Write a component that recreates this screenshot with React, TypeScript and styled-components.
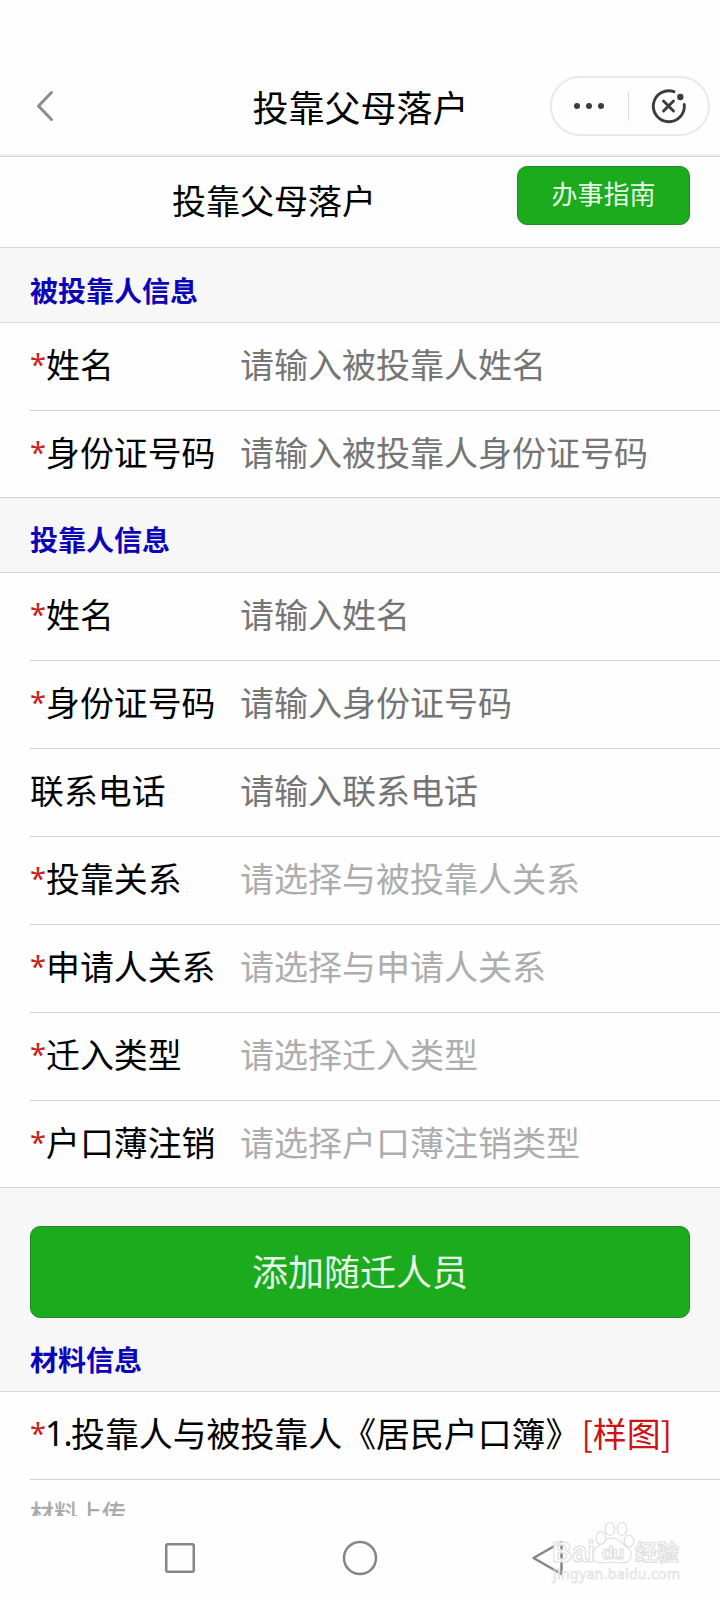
import React from 'react';
import styled, { createGlobalStyle } from 'styled-components';

const GlobalStyle = createGlobalStyle`
  * { box-sizing: border-box; }
  body {
    margin: 0;
    background: #fefefe;
    color: #000;
    font-family: "Noto Sans CJK SC", "Noto Sans", sans-serif;
  }
`;

const Screen = styled.div`
  position: relative;
  display: flex;
  flex-direction: column;
  width: 720px;
  height: 1600px;
  overflow: hidden;
  background: #fefefe;
`;

const NavBar = styled.header`
  display: grid;
  grid-template-columns: 170px 1fr 170px;
  align-items: center;
  flex: none;
  height: 157px;
  padding: 58px 10px 3px 36px;
  border-bottom: 1px solid #d3d3d3;
  box-shadow: inset 0 -2px 0 #f2f2f2;
`;

const NavTitle = styled.h1`
  margin: 0;
  padding: 1px 25px 0 0;
  font-size: 36px;
  font-weight: 400;
  line-height: 52px;
  text-align: center;
  white-space: nowrap;
`;

const Capsule = styled.div`
  display: flex;
  align-items: center;
  justify-self: end;
  width: 160px;
  height: 60px;
  border: 2px solid #e9e9e9;
  border-radius: 30px;
`;

const CapsuleHalf = styled.div<{ $width: number }>`
  display: flex;
  justify-content: center;
  width: ${(p) => p.$width}px;
`;

const CapsuleDivider = styled.div`
  width: 1px;
  height: 30px;
  background: #dedede;
`;

const PageHead = styled.div`
  display: flex;
  justify-content: space-between;
  align-items: flex-start;
  flex: none;
  height: 91px;
  padding: 9px 30px 0 172px;
  border-bottom: 1px solid #d6d6d6;
`;

const PageTitle = styled.h2`
  margin: 0;
  padding-top: 9px;
  font-size: 34px;
  font-weight: 400;
  line-height: 50px;
`;

const GreenButton = styled.button<{ $large?: boolean }>`
  display: flex;
  align-items: center;
  justify-content: center;
  width: ${(p) => (p.$large ? '660px' : '173px')};
  height: ${(p) => (p.$large ? '92px' : '59px')};
  padding: 0 0 ${(p) => (p.$large ? '3px' : '5px')};
  border: 1px solid #238a26;
  border-radius: 10px;
  background: #1bab1c;
  color: #e9fbe9;
  font-family: inherit;
  font-size: ${(p) => (p.$large ? 36 : 26)}px;
  line-height: 1.4;
`;

const SectionTitle = styled.h3<{ $height: number; $top: number }>`
  flex: none;
  height: ${(p) => p.$height}px;
  margin: 0;
  padding: ${(p) => p.$top}px 0 0 30px;
  border-bottom: 1px solid #d6d6d6;
  background: #f7f7f7;
  color: #0c04b8;
  font-size: 28px;
  font-weight: 700;
  line-height: 40px;
`;

const Group = styled.section`
  flex: none;
  padding-left: 30px;
  border-bottom: 1px solid #d6d6d6;
`;

const Row = styled.div`
  display: flex;
  height: 88px;
  padding-top: 16px;
  border-bottom: 1px solid #d3d3d3;
  font-size: 33.9px;
  line-height: 50px;
  white-space: nowrap;

  &:last-child {
    height: 86px;
    border-bottom: 0;
  }
`;

const Label = styled.label`
  display: flex;
  width: 210px;
`;

const Star = styled.span`
  width: 16px;
  color: #cb2020;
  font-family: "Noto Sans", sans-serif;
  font-size: 29px;
`;

const Placeholder = styled.span<{ $select?: boolean }>`
  color: ${(p) => (p.$select ? '#adadad' : '#757575')};
  font-size: 34px;
`;

const AddArea = styled.div`
  flex: none;
  height: 131px;
  padding: 38px 30px 0;
  background: #f7f7f7;
`;

const MaterialRow = styled(Row)`
  flex: none;
  margin-left: 30px;
`;

const Numeral = styled.span`
  width: 26px;
  margin-left: -1px;
  font-family: "Noto Sans", sans-serif;
  letter-spacing: -1px;
`;

const SampleLink = styled.span`
  margin-left: 2px;
  color: #cc1414;
`;

const UploadClip = styled.div`
  flex: none;
  height: 36px;
  padding: 14px 0 0 30px;
  overflow: hidden;
  color: #aaa;
  font-size: 24px;
  font-weight: 500;
  line-height: 36px;
`;

const SystemNav = styled.nav`
  display: flex;
  flex: 1;
  gap: 144px;
  padding: 24px 0 0 162px;
`;

const BackKey = styled.svg`
  margin-left: 9px;
`;

const Watermark = styled.svg`
  position: absolute;
  left: 545px;
  top: 1515px;
`;

type Field = { label: string; hint: string; required?: boolean; select?: boolean };

const hostFields: Field[] = [
  { label: '姓名', hint: '请输入被投靠人姓名', required: true },
  { label: '身份证号码', hint: '请输入被投靠人身份证号码', required: true },
];

const applicantFields: Field[] = [
  { label: '姓名', hint: '请输入姓名', required: true },
  { label: '身份证号码', hint: '请输入身份证号码', required: true },
  { label: '联系电话', hint: '请输入联系电话' },
  { label: '投靠关系', hint: '请选择与被投靠人关系', required: true, select: true },
  { label: '申请人关系', hint: '请选择与申请人关系', required: true, select: true },
  { label: '迁入类型', hint: '请选择迁入类型', required: true, select: true },
  { label: '户口薄注销', hint: '请选择户口薄注销类型', required: true, select: true },
];

const FieldGroup = ({ fields }: { fields: Field[] }) => (
  <Group>
    {fields.map((f) => (
      <Row key={f.label}>
        <Label>
          {f.required && <Star>*</Star>}
          {f.label}
        </Label>
        <Placeholder $select={f.select}>{f.hint}</Placeholder>
      </Row>
    ))}
  </Group>
);

const BackIcon = () => (
  <svg width="20" height="32" viewBox="0 0 20 32" fill="none" stroke="#8c8c8c" strokeWidth="3" strokeLinecap="round" strokeLinejoin="round">
    <path d="M15.500 2.500 2.500 16l13 13.500" />
  </svg>
);

const DotsIcon = () => (
  <svg width="32" height="8" viewBox="0 0 32 8" fill="#3c3c3c">
    <circle cx="3" cy="4" r="3" />
    <circle cx="15" cy="4" r="3" />
    <circle cx="27" cy="4" r="3" />
  </svg>
);

const CloseIcon = () => (
  <svg width="36" height="36" viewBox="0 0 36 36" fill="none" stroke="#3c3c3c" strokeWidth="2.900" strokeLinecap="round">
    <path d="M24 3.700A15.500 15.500 0 1 0 34.200 16.500" />
    <path d="m13.500 13 10 10M23.500 13 13.500 23" />
    <circle cx="30.300" cy="9" r="3.200" fill="#3c3c3c" stroke="none" />
  </svg>
);

const BaiduMark = () => (
  <Watermark width="150" height="76" viewBox="0 0 150 76" fill="#fff" fillOpacity="0.85" stroke="#dedede" strokeWidth="1.200">
    <g fontWeight="700" fontFamily="Liberation Sans, sans-serif">
      <text x="7" y="47" fontSize="30" textLength="43" lengthAdjust="spacingAndGlyphs">Bai</text>
      <path d="M52 47c-6-3-5-11 0-15 6-4 8-9 15-9s9 5 15 9c5 4 6 12 0 15-4 2-9 0-15 0s-11 2-15 0z" />
      <ellipse cx="56" cy="23" rx="4.800" ry="6.300" />
      <ellipse cx="65" cy="14" rx="4.800" ry="6.500" />
      <ellipse cx="77" cy="14" rx="4.800" ry="6.500" />
      <ellipse cx="84" cy="26" rx="4.800" ry="6" />
      <text x="57" y="44" fontSize="19" textLength="22">du</text>
    </g>
    <text x="90" y="45" fontSize="22" fontWeight="700" textLength="44" fontFamily="Noto Sans CJK SC, sans-serif">经验</text>
    <text x="8" y="64" fontSize="14" textLength="127" strokeWidth="0.700" fontFamily="Noto Sans, sans-serif">jingyan.baidu.com</text>
  </Watermark>
);

export default function App() {
  return (
    <>
      <GlobalStyle />
      <Screen>
        <NavBar>
          <BackIcon />
          <NavTitle>投靠父母落户</NavTitle>
          <Capsule>
            <CapsuleHalf $width={76}><DotsIcon /></CapsuleHalf>
            <CapsuleDivider />
            <CapsuleHalf $width={80}><CloseIcon /></CapsuleHalf>
          </Capsule>
        </NavBar>
        <PageHead>
          <PageTitle>投靠父母落户</PageTitle>
          <GreenButton>办事指南</GreenButton>
        </PageHead>
        <SectionTitle $height={75} $top={22}>被投靠人信息</SectionTitle>
        <FieldGroup fields={hostFields} />
        <SectionTitle $height={75} $top={21}>投靠人信息</SectionTitle>
        <FieldGroup fields={applicantFields} />
        <AddArea>
          <GreenButton $large>添加随迁人员</GreenButton>
        </AddArea>
        <SectionTitle $height={73} $top={20}>材料信息</SectionTitle>
        <MaterialRow>
          <Star>*</Star>
          <Numeral>1.</Numeral>
          投靠人与被投靠人《居民户口簿》
          <SampleLink>[样图]</SampleLink>
        </MaterialRow>
        <UploadClip>材料上传</UploadClip>
        <SystemNav>
          <svg width="36" height="36" viewBox="0 0 36 36" fill="none" stroke="#858585" strokeWidth="2.500">
            <rect x="4.250" y="4.250" width="27.500" height="27.500" rx="1.500" />
          </svg>
          <svg width="36" height="36" viewBox="0 0 36 36" fill="none" stroke="#858585" strokeWidth="2.500">
            <circle cx="18" cy="18" r="16" />
          </svg>
          <BackKey width="36" height="36" viewBox="0 0 36 36" fill="none" stroke="#858585" strokeWidth="2.500" strokeLinejoin="round">
            <path d="M2.500 18 30.500 2v32z" />
          </BackKey>
        </SystemNav>
        <BaiduMark />
      </Screen>
    </>
  );
}
